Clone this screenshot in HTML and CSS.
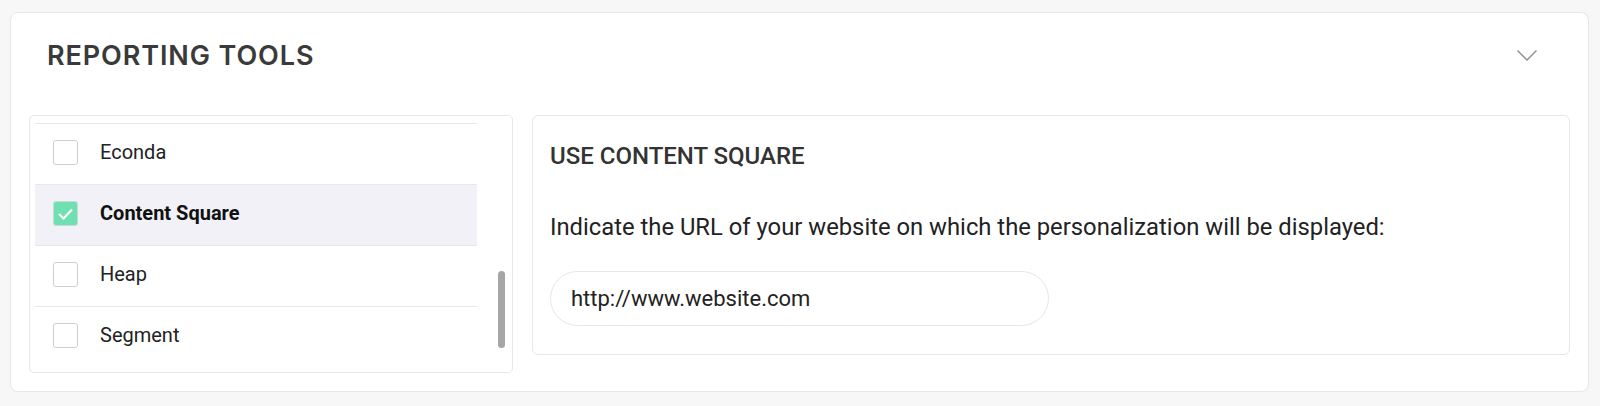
FILE: index.html
```html
<!DOCTYPE html>
<html>
    <head>
        <link rel="stylesheet" href="styles.css">
    </head>
    <body>
        <div class="card">
            <div class="cardHeader">
                <h2 class="cardTitle">REPORTING TOOLS</h2>
                <svg class="chevron" width="22" height="13" viewBox="0 0 22 13">
                    <polyline points="1.5,1.5 11,11 20.5,1.5" fill="none" stroke="#8c8c8c" stroke-width="1.4"/>
                </svg>
            </div>
            <div class="cardBody">
                <div class="toolList">
                    <div class="rows">
                        <div class="row">
                            <span class="box"></span>
                            <span class="label">Econda</span>
                        </div>
                        <div class="row selected">
                            <span class="box checked">
                                <svg width="25" height="25" viewBox="0 0 25 25">
                                    <polyline points="6,13 10.5,17.5 19,8.5" fill="none" stroke="#fff" stroke-width="2.2"/>
                                </svg>
                            </span>
                            <span class="label">Content Square</span>
                        </div>
                        <div class="row">
                            <span class="box"></span>
                            <span class="label">Heap</span>
                        </div>
                        <div class="row">
                            <span class="box"></span>
                            <span class="label">Segment</span>
                        </div>
                    </div>
                    <div class="track">
                        <div class="thumb"></div>
                    </div>
                </div>
                <div class="settings">
                    <h3 class="settingsTitle">USE CONTENT SQUARE</h3>
                    <p class="hint">Indicate the URL of your website on which the personalization will be displayed:</p>
                    <input class="urlInput" type="text" value="http://www.website.com">
                </div>
            </div>
        </div>
    </body>
</html>
```

FILE: styles.css
```css
:root {
    --line: #e7e7e7;
    --text: #222;
    --mint: #6ee0b1;
}
body {
    margin: 0;
    padding: 12px 11px 0 10px;
    background: #f7f7f7;
    font-family: Roboto, "Liberation Sans", sans-serif;
    color: var(--text);
}
.card {
    background: #fff;
    border: 1px solid var(--line);
    border-radius: 8px;
    padding: 0 18px 18px 18px;
}
.cardHeader {
    display: flex;
    align-items: center;
    justify-content: space-between;
    height: 84px;
    padding: 0 32px 0 18px;
    margin-bottom: 18px;
}
.cardTitle {
    margin: 0;
    font-family: Inter, "Open Sans", sans-serif;
    font-size: 27px;
    font-weight: 600;
    color: #3a3a3a;
    letter-spacing: 0.9px;
}
.cardBody {
    display: flex;
    align-items: flex-start;
    gap: 19px;
}
.toolList {
    display: flex;
    width: 484px;
    height: 258px;
    box-sizing: border-box;
    border: 1px solid var(--line);
    border-radius: 5px;
    padding: 7px 0 0 5px;
    overflow: hidden;
}
.rows {
    width: 442px;
}
.row {
    display: flex;
    align-items: center;
    gap: 22px;
    height: 61px;
    padding: 0 0 4px 18px;
    box-sizing: border-box;
    border-top: 1px solid var(--line);
    font-size: 20px;
}
.row.selected {
    background: #f2f1f8;
    font-weight: 700;
    color: #111;
}
.box {
    width: 25px;
    height: 25px;
    box-sizing: border-box;
    border: 1px solid #cfcfcf;
    border-radius: 3px;
    flex-shrink: 0;
}
.box.checked {
    background: var(--mint);
    border-color: #c6dcd2;
}
.box svg {
    display: block;
    margin: -1px;
}
.track {
    flex: 1;
    padding: 148px 0 0 21px;
}
.thumb {
    width: 7px;
    height: 77px;
    border-radius: 4px;
    background: #a6a6a6;
}
.settings {
    flex: 1;
    border: 1px solid var(--line);
    border-radius: 6px;
    padding: 28px 17px 28px 17px;
}
.settingsTitle {
    margin: 0;
    font-size: 24px;
    line-height: 24px;
    font-weight: 500;
    color: #333;
}
.hint {
    margin: 47px 0 0 0;
    font-size: 23.8px;
    line-height: 24px;
}
.urlInput {
    display: block;
    margin-top: 32px;
    width: 499px;
    height: 55px;
    box-sizing: border-box;
    border: 1.5px solid #e6e6e6;
    border-radius: 28px;
    padding: 0 20px;
    font-family: Roboto, sans-serif;
    font-size: 22px;
    color: var(--text);
    outline: none;
}
```
